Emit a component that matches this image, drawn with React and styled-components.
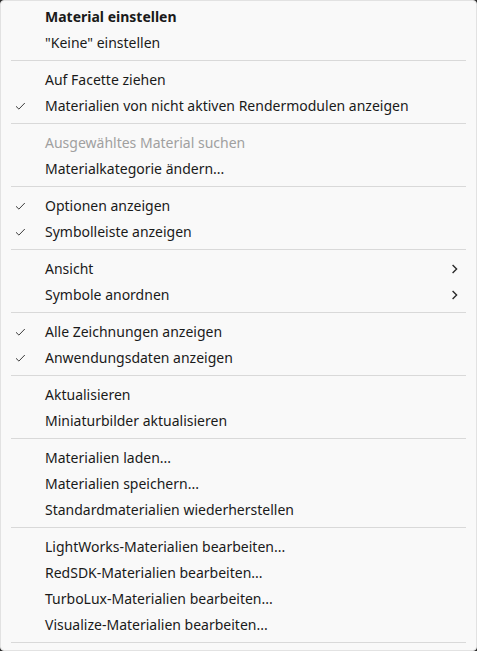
import React from 'react';
import styled, { createGlobalStyle } from 'styled-components';

const Global = createGlobalStyle`
  html, body { margin: 0; padding: 0; background: #2a2a2a; }
  body { width: 477px; height: 651px; overflow: hidden; }
`;

const Menu = styled.div`
  box-sizing: border-box;
  width: 477px;
  height: 651px;
  background: #f9f9f9;
  border: 1px solid #e2e2e2;
  border-radius: 4px;
  padding: 2px 0;
  font-family: "Noto Sans", "Open Sans", sans-serif;
  font-size: 14px;
  color: #1a1a1a;
`;

const Item = styled.div`
  height: 26px;
  display: grid;
  grid-template-columns: 44px 1fr 25px;
  align-items: center;
  white-space: nowrap;
  font-weight: ${p => (p.$bold ? 700 : 400)};
  color: ${p => (p.$disabled ? '#a0a0a0' : '#1a1a1a')};
`;

const CheckCell = styled.span`
  display: flex;
  align-items: center;
  padding-left: 14px;
`;

const Label = styled.span`
  line-height: 26px;
  padding-top: 1px;
`;

const ArrowCell = styled.span`
  display: flex;
  align-items: center;
`;

const Separator = styled.div`
  height: 1px;
  margin: 5px 10px;
  background: #d9d9d9;
`;

const Check = () => (
  <svg width="11" height="8" viewBox="0 0 11 8">
    <path d="M1 4.3 L3.9 7.1 L9.8 1" fill="none" stroke="#3c3c3c" strokeWidth="1" />
  </svg>
);

const Chevron = () => (
  <svg width="8" height="10" viewBox="0 0 8 10">
    <path d="M1.6 1 L5.6 5 L1.6 9" fill="none" stroke="#2a2a2a" strokeWidth="1.4" />
  </svg>
);

const groups = [
  [
    { t: 'Material einstellen', bold: true },
    { t: '"Keine" einstellen' },
  ],
  [
    { t: 'Auf Facette ziehen' },
    { t: 'Materialien von nicht aktiven Rendermodulen anzeigen', check: true },
  ],
  [
    { t: 'Ausgewähltes Material suchen', disabled: true },
    { t: 'Materialkategorie ändern...' },
  ],
  [
    { t: 'Optionen anzeigen', check: true },
    { t: 'Symbolleiste anzeigen', check: true },
  ],
  [
    { t: 'Ansicht', sub: true },
    { t: 'Symbole anordnen', sub: true },
  ],
  [
    { t: 'Alle Zeichnungen anzeigen', check: true },
    { t: 'Anwendungsdaten anzeigen', check: true },
  ],
  [
    { t: 'Aktualisieren' },
    { t: 'Miniaturbilder aktualisieren' },
  ],
  [
    { t: 'Materialien laden...' },
    { t: 'Materialien speichern...' },
    { t: 'Standardmaterialien wiederherstellen' },
  ],
  [
    { t: 'LightWorks-Materialien bearbeiten...' },
    { t: 'RedSDK-Materialien bearbeiten...' },
    { t: 'TurboLux-Materialien bearbeiten...' },
    { t: 'Visualize-Materialien bearbeiten...' },
  ],
];

export default function App() {
  return (
    <>
      <Global />
      <Menu>
        {groups.map((g, gi) => (
          <React.Fragment key={gi}>
            {g.map((it, ii) => (
              <Item key={ii} $bold={it.bold} $disabled={it.disabled}>
                <CheckCell>{it.check ? <Check /> : null}</CheckCell>
                <Label>{it.t}</Label>
                <ArrowCell>{it.sub ? <Chevron /> : null}</ArrowCell>
              </Item>
            ))}
            <Separator />
          </React.Fragment>
        ))}
      </Menu>
    </>
  );
}
